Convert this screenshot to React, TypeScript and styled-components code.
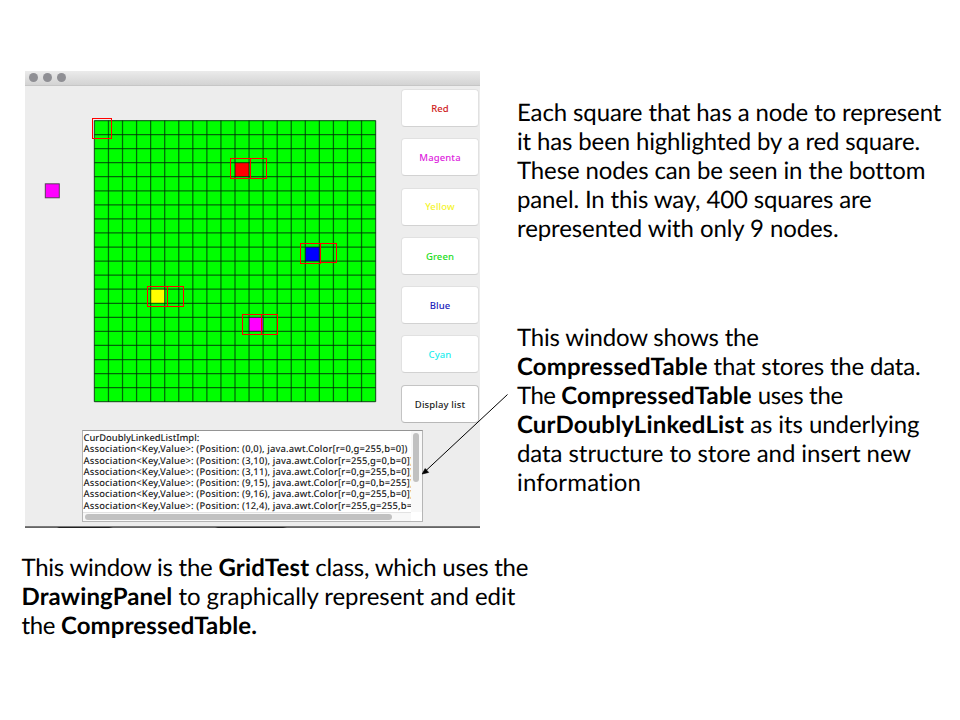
import React from "react";
import styled, { createGlobalStyle } from "styled-components";

const Global = createGlobalStyle`
  * { box-sizing: border-box; }
  body { margin: 0; background: #fff; }
`;

const uiFont = `"Noto Sans", "Open Sans", sans-serif`;

const Slide = styled.main`
  width: 960px;
  height: 720px;
  overflow: hidden;
  position: relative;
  background: #fff;
  color: #000;
  font-family: Lato, sans-serif;
  text-rendering: geometricPrecision;
  font-variant-ligatures: none;
  padding: 71px 0 0 21.5px;
`;

const Columns = styled.div`
  display: flex;
  align-items: flex-start;
`;

const Window = styled.section`
  width: 455px;
  height: 457px;
  margin-left: 3.5px;
  flex: none;
  background: #ededed;
  display: flex;
  flex-direction: column;
`;

const TitleBar = styled.header`
  height: 15px;
  flex: none;
  display: flex;
  align-items: center;
  gap: 5px;
  padding: 0 0 2px 4px;
  background: linear-gradient(#ebebeb, #d3d3d3);
  border-bottom: 1px solid #c6c6c6;
`;

const Light = styled.i`
  width: 9px;
  height: 9px;
  border-radius: 50%;
  background: #8f8f94;
`;

const Content = styled.div`
  display: grid;
  grid-template-columns: 376px 79px;
  height: 337px;
`;

const Board = styled.svg`
  display: block;
  width: 376px;
  height: 337px;
`;

const Palette = styled.div`
  display: flex;
  flex-direction: column;
  gap: 11.3px;
  padding-top: 3px;
`;

const ColorButton = styled.button<{ $ink: string; $strong?: boolean }>`
  width: 78px;
  height: 38px;
  flex: none;
  padding: 1px 0 0;
  border: 1px solid ${(p) => (p.$strong ? "#c4c4c4" : "#e1e1e1")};
  border-bottom-color: ${(p) => (p.$strong ? "#b8b8b8" : "#d2d2d2")};
  border-radius: 4px;
  background: #fff;
  color: ${(p) => p.$ink};
  font: 500 9.5px/1 ${uiFont};
  letter-spacing: 0.12px;
  white-space: nowrap;
`;

const ListPane = styled.div`
  width: 341px;
  height: 92px;
  margin: 7px 0 0 57px;
  flex: none;
  display: grid;
  grid-template-columns: minmax(0, 1fr) 11px;
  grid-template-rows: minmax(0, 1fr) 9px;
  background: #fff;
  border: 1px solid #b5b5b5;
  border-top-color: #949494;
`;

const Lines = styled.div`
  overflow: hidden;
  padding: 1px 0 0 0.5px;
  font: 500 9.4px/11.25px ${uiFont};
  color: #222;
  white-space: pre;
`;

const Line = styled.div<{ $track: number }>`
  letter-spacing: ${(p) => p.$track}px;
`;

const VTrack = styled.div`
  background: #f8f8f8;
  padding: 2px 0 0 2px;
`;

const HTrack = styled.div`
  background: #f8f8f8;
  border-top: 1px solid #e2e2e2;
  padding: 1px 0 0 2px;
`;

const Thumb = styled.div<{ $w: number; $h: number }>`
  width: ${(p) => p.$w}px;
  height: ${(p) => p.$h}px;
  border-radius: 3px;
  background: #c1c1c1;
`;

const WindowEdge = styled.div`
  height: 2px;
  margin-top: auto;
  background:
    linear-gradient(90deg, transparent 32px, #222 34px 84px, transparent 88px 190px, #222 193px 258px, transparent 262px) 0 1px / 100% 1px no-repeat,
    linear-gradient(#858585, #5a5a5a);
`;

const Notes = styled.div`
  margin-left: 37px;
  padding-top: 27px;
  display: flex;
  flex-direction: column;
  gap: 80px;
`;

const Note = styled.p`
  margin: 0;
  font-size: 24px;
  line-height: 29px;
  white-space: nowrap;
`;

const Caption = styled(Note)`
  margin-top: 25px;
`;

const Run = styled.span<{ $track: number; $bold?: boolean }>`
  letter-spacing: ${(p) => p.$track}px;
  font-weight: ${(p) => (p.$bold ? 700 : 400)};
`;

const Arrow = styled.svg`
  position: absolute;
  left: 415px;
  top: 388px;
`;

const BUTTONS = [
  { label: "Red", ink: "#cf2222" },
  { label: "Magenta", ink: "#dd22dd" },
  { label: "Yellow", ink: "#f4f430" },
  { label: "Green", ink: "#22dd22" },
  { label: "Blue", ink: "#2222bb" },
  { label: "Cyan", ink: "#22eeee" },
];

const ENTRIES = [
  "(0,0), java.awt.Color[r=0,g=255,b=0])",
  "(3,10), java.awt.Color[r=255,g=0,b=0])",
  "(3,11), java.awt.Color[r=0,g=255,b=0])",
  "(9,15), java.awt.Color[r=0,g=0,b=255])",
  "(9,16), java.awt.Color[r=0,g=255,b=0])",
  "(12,4), java.awt.Color[r=255,g=255,b=0])",
];

type TextRun = { text: string; track: number; bold?: boolean };

const r = (text: string, track: number): TextRun => ({ text, track });
const b = (text: string, track = 0.15): TextRun => ({ text, track, bold: true });

const NODES_NOTE: TextRun[][] = [
  [r("Each square that has a node to represent", -0.12)],
  [r("it has been highlighted by a red square.", -0.15)],
  [r("These nodes can be seen in the bottom", -0.12)],
  [r("panel. In this way, 400 squares are", -0.14)],
  [r("represented with only 9 nodes.", -0.1)],
];

const TABLE_NOTE: TextRun[][] = [
  [r("This window shows the", -0.19)],
  [b("CompressedTable", 0.16), r(" that stores the data.", -0.18)],
  [r("The ", -0.5), b("CompressedTable", 0.16), r(" uses the", -0.3)],
  [b("CurDoublyLinkedList", 0.16), r(" as its underlying", -0.08)],
  [r("data structure to store and insert new", -0.07)],
  [r("information", 0.18)],
];

const WINDOW_NOTE: TextRun[][] = [
  [r("This window is the ", -0.25), b("GridTest", 0.18), r(" class, which uses the", -0.22)],
  [b("DrawingPanel", 0.13), r(" to graphically represent and edit", -0.04)],
  [r("the ", -0.35), b("CompressedTable.", 0.14)],
];

const PITCH = 14.06;
const X0 = 94.4;
const Y0 = 120.5;
const SPAN = PITCH * 20;
const STEPS = Array.from({ length: 21 }, (_, i) => i);

const FILLED = [
  { row: 3, col: 10, fill: "#f00" },
  { row: 9, col: 15, fill: "#00f" },
  { row: 12, col: 4, fill: "#ff0" },
  { row: 14, col: 11, fill: "#f0f" },
];

/* x, y, width, height of each node highlight */
const NODES = [
  [92, 118, 20, 21],
  [230, 158, 21, 21],
  [250, 158, 17, 21],
  [300, 243, 21, 21],
  [320, 243, 17, 20],
  [147, 286, 21, 21],
  [167, 286, 17, 21],
  [242, 314, 20, 21],
  [261, 314, 17, 21],
];

function DrawingBoard() {
  return (
    <Board viewBox="25 86 376 337">
      <rect x={X0} y={Y0} width={SPAN} height={SPAN} fill="#0f0" />
      {FILLED.map((c) => (
        <rect key={c.fill} x={X0 + c.col * PITCH} y={Y0 + c.row * PITCH} width={PITCH} height={PITCH} fill={c.fill} />
      ))}
      <g stroke="#00280a" strokeOpacity="0.7" strokeWidth="1.25">
        {STEPS.map((i) => (
          <React.Fragment key={i}>
            <line x1={X0 + i * PITCH} x2={X0 + i * PITCH} y1={Y0} y2={Y0 + SPAN} />
            <line y1={Y0 + i * PITCH} y2={Y0 + i * PITCH} x1={X0} x2={X0 + SPAN} />
          </React.Fragment>
        ))}
      </g>
      <rect x="45.3" y="183.8" width="14" height="14" fill="#f0f" stroke="#333" strokeOpacity="0.8" />
      <g fill="none" stroke="#f00" shapeRendering="crispEdges">
        {NODES.map(([x, y, w, h]) => (
          <rect key={`${x}-${y}`} x={x + 0.5} y={y + 0.5} width={w - 1} height={h - 1} />
        ))}
      </g>
    </Board>
  );
}

function RichLines({ lines }: { lines: TextRun[][] }) {
  return (
    <>
      {lines.map((runs, i) => (
        <React.Fragment key={i}>
          {i > 0 && <br />}
          {runs.map((run) => (
            <Run key={run.text} $track={run.track} $bold={run.bold}>{run.text}</Run>
          ))}
        </React.Fragment>
      ))}
    </>
  );
}

export default function App() {
  return (
    <Slide>
      <Global />
      <Columns>
        <Window>
          <TitleBar>
            <Light />
            <Light />
            <Light />
          </TitleBar>
          <Content>
            <DrawingBoard />
            <Palette>
              {BUTTONS.map((item) => (
                <ColorButton key={item.label} $ink={item.ink}>{item.label}</ColorButton>
              ))}
              <ColorButton $ink="#222" $strong>Display list</ColorButton>
            </Palette>
          </Content>
          <ListPane>
            <Lines>
              <Line $track={-0.02}>CurDoublyLinkedListImpl:</Line>
              {ENTRIES.map((e) => (
                <Line key={e} $track={0.145}>{"Association<Key,Value>: (Position: " + e}</Line>
              ))}
            </Lines>
            <VTrack>
              <Thumb $w={6} $h={49} />
            </VTrack>
            <HTrack>
              <Thumb $w={307} $h={6} />
            </HTrack>
          </ListPane>
          <WindowEdge />
        </Window>
        <Notes>
          <Note><RichLines lines={NODES_NOTE} /></Note>
          <Note><RichLines lines={TABLE_NOTE} /></Note>
        </Notes>
      </Columns>
      <Caption><RichLines lines={WINDOW_NOTE} /></Caption>
      <Arrow width="100" height="90" viewBox="415 388 100 90">
        <line x1="507.5" y1="394.5" x2="425" y2="471.5" stroke="#000" />
        <path d="M422.2 474 L425.2 468.6 L428.6 472.4 Z" fill="#000" stroke="#000" strokeWidth="0.7" />
      </Arrow>
    </Slide>
  );
}
